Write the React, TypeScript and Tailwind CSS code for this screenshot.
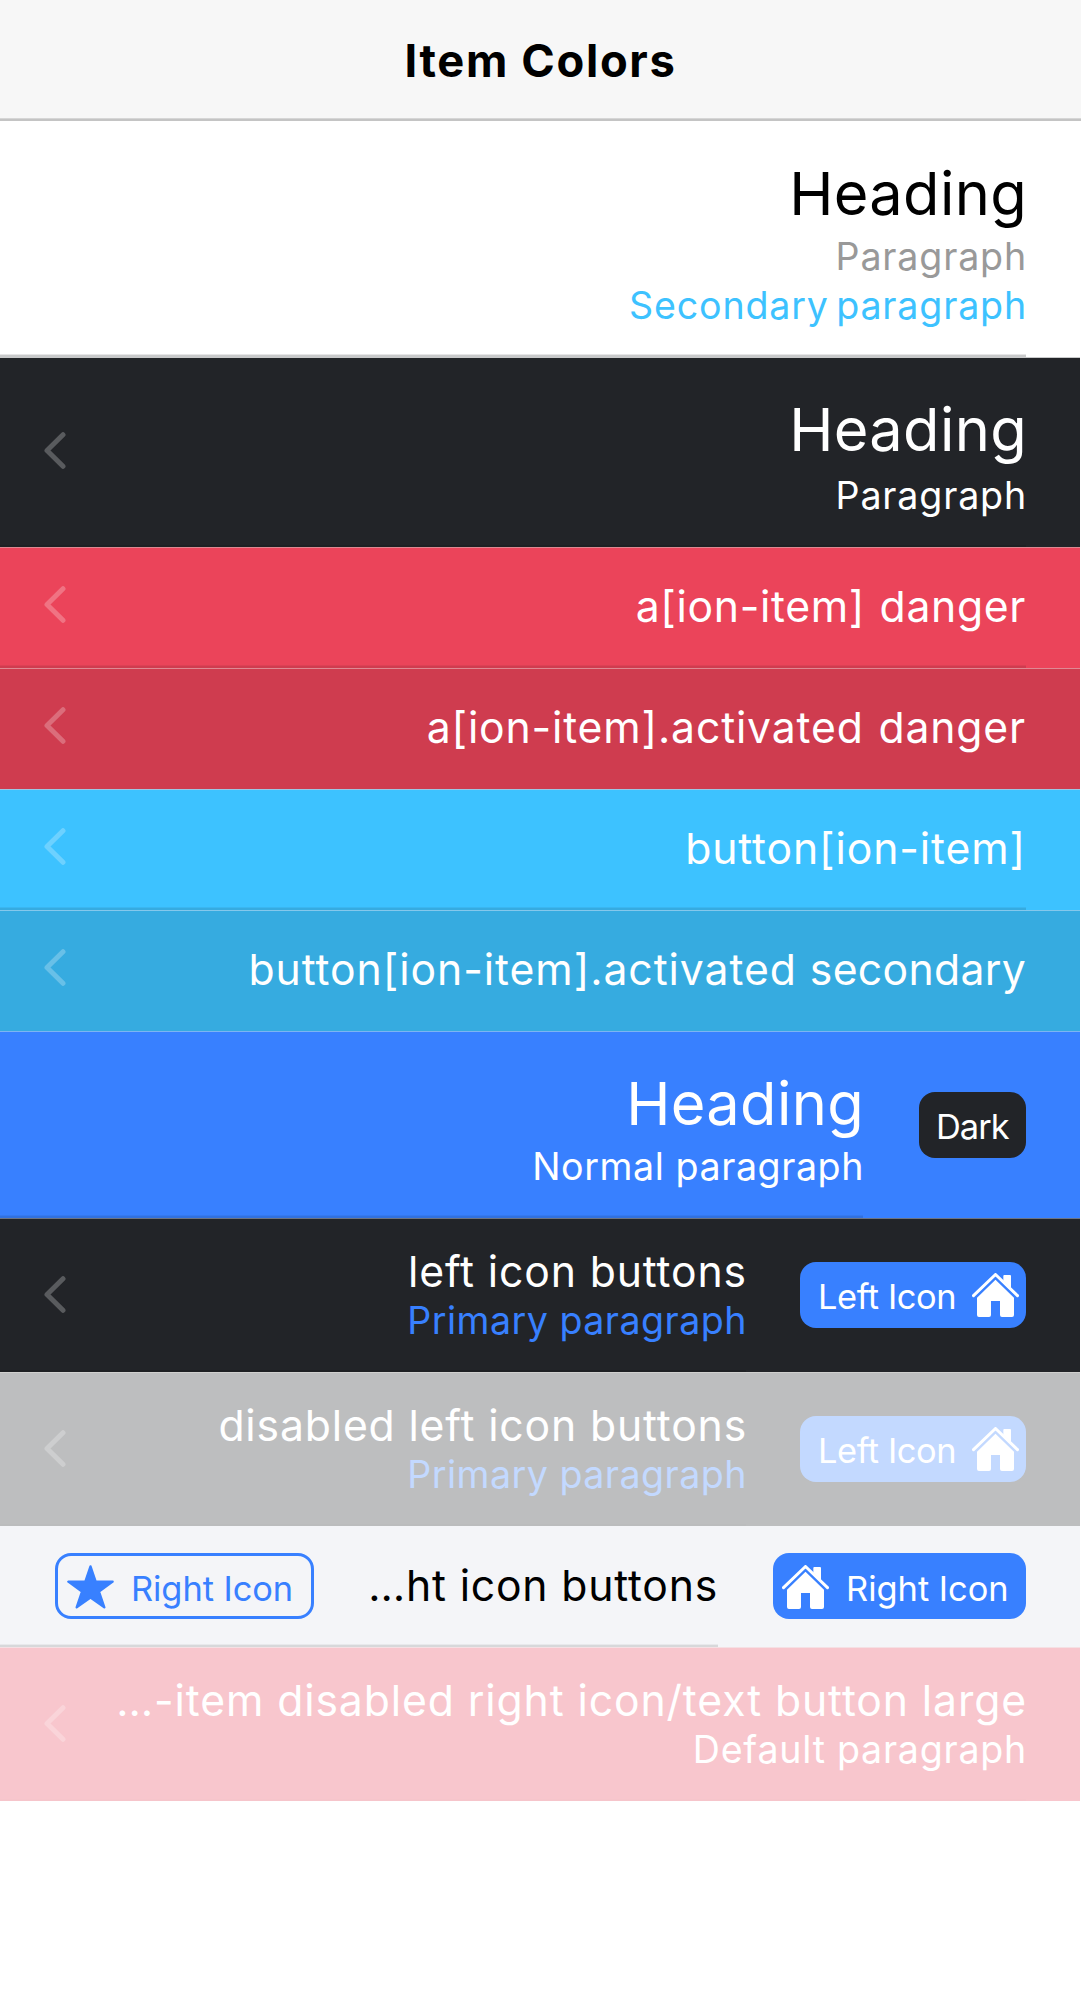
import type { ReactNode } from "react";

function Chevron({ className }: { className: string }) {
  return (
    <svg viewBox="0 0 22 37" className={"ml-[44px] h-[37px] w-[22px] shrink-0 text-white/25 " + className}>
      <path d="M19 2.7 L3 18.5 L19 34.3" fill="none" stroke="currentColor" strokeWidth="5" strokeLinecap="round" strokeLinejoin="round" />
    </svg>
  );
}

function Home({ className }: { className: string }) {
  return (
    <svg viewBox="0 0 141 132" className={"h-[44px] w-[47px] shrink-0 " + className} fill="currentColor">
      <path d="M4.500 68 L70.500 4.500 L136.500 68" fill="none" stroke="currentColor" strokeWidth="9" strokeLinecap="round" strokeLinejoin="round" />
      <path d="M94 23 V9 Q94 6 97 6 H114 Q117 6 117 9 V46 Z" />
      <path d="M70.500 20 L126 74 V126 Q126 132 120 132 H90 Q84 132 84 126 V84 H57 V126 Q57 132 51 132 H21 Q15 132 15 126 V74 Z" />
    </svg>
  );
}

function Star({ className }: { className: string }) {
  return (
    <svg viewBox="0 0 141 132" className={"h-[44px] w-[47px] shrink-0 " + className} fill="currentColor">
      <path d="M70.500 4 L86 50 H137 L96 80 L112 127 L70.500 98 L29 127 L45 80 L4 50 H55 Z" stroke="currentColor" strokeWidth="7" strokeLinejoin="round" />
    </svg>
  );
}

const heading = "mr-[-1px] text-[59.5px] leading-[72px] tracking-[0.35px]";
const para = "mr-[-1px] text-[37.6px] leading-[49px]";
const label = "text-[42.7px] leading-[54px]";
const button = "flex h-[66px] shrink-0 items-start rounded-[16px] text-[34.4px] leading-[70px]";

function Row({ className, line, slot, children }: { className: string; line: string; slot?: ReactNode; children: ReactNode }) {
  return (
    <div className={"flex items-start border-t pr-[54px] " + className}>
      <div className={"flex h-full flex-1 items-start justify-between border-b-2 " + line}>{children}</div>
      {slot}
    </div>
  );
}

const dangerLine = "border-[#cf3c4f] shadow-[inset_0_-1px_0_#dd4055]";
const secondaryLine = "border-[#36abe0] shadow-[inset_0_-1px_0_#3ab6f0]";

export default function App() {
  return (
    <div className="h-[1999px] w-[1081px] overflow-hidden whitespace-nowrap bg-white font-[Inter,sans-serif] text-black">
      <div className="w-[1080px]">
        <header className="flex h-[121px] w-[1081px] items-start justify-center border-b-2 border-[#c4c4c4] bg-[#f7f7f7] pt-[30px] shadow-[inset_0_-1px_0_#d6d6d6]">
          <h1 className="text-[45.3px] leading-[61px] font-bold tracking-[1.65px]">Item Colors</h1>
        </header>

        <Row className="h-[236px] border-white bg-white" line="border-[#c8c9ca] shadow-[inset_0_-1px_0_#e6e6e7]">
          <div className="ml-auto pt-[35px] text-right">
            <h2 className={heading}>Heading</h2>
            <p className={para + " mt-[3px] tracking-[0.84px] text-[#999999]"}>Paragraph</p>
            <p className={para + " tracking-[0.84px] text-[#3dc2ff] [word-spacing:-4px]"}>Secondary paragraph</p>
          </div>
        </Row>

        <Row className="h-[190px] border-[#c8c9ca] bg-[#222428] text-white" line="border-[#1e2023]">
          <Chevron className="mt-[74px]" />
          <div className="pt-[35px] text-right">
            <h2 className={heading}>Heading</h2>
            <p className={para + " mt-[6px] tracking-[0.84px]"}>Paragraph</p>
          </div>
        </Row>

        <Row className="h-[121px] border-[#dc8891] bg-[#eb445a] text-white" line={dangerLine}>
          <Chevron className="mt-[38px]" />
          <div className={label + " mt-[32px] tracking-[0.65px] [word-spacing:2px]"}>a[ion-item] danger</div>
        </Row>

        <Row className="h-[121px] border-[#e08893] bg-[#cf3c4f] text-white" line="border-[#cf3c4f]">
          <Chevron className="mt-[38px]" />
          <div className={label + " mt-[32px] tracking-[0.84px] [word-spacing:2px]"}>a[ion-item].activated danger</div>
        </Row>

        <Row className="h-[121px] border-[#9cc8e4] bg-[#3dc2ff] text-white" line={secondaryLine}>
          <Chevron className="mt-[38px]" />
          <div className={label + " mt-[32px] tracking-[0.88px]"}>button[ion-item]</div>
        </Row>

        <Row className="h-[121px] border-[#84c8ec] bg-[#36abe0] text-white" line="border-[#36abe0]">
          <Chevron className="mt-[38px]" />
          <div className={label + " mt-[32px] tracking-[0.94px]"}>
            button[ion-item].activated <span className="tracking-[0.3px]">secondary</span>
          </div>
        </Row>

        <Row
          className="h-[187px] border-[#7cb4f2] bg-[#3880ff] text-white"
          line="border-[#3171e0] shadow-[inset_0_-1px_0_#3579f0]"
          slot={
            <div className={button + " mt-[60px] ml-[56px] w-[107px] bg-[#222428] pl-[17px]"}>
              <span className="tracking-[-0.97px]">Dark</span>
            </div>
          }
        >
          <div className="ml-auto pt-[35px] text-right">
            <h2 className={heading}>Heading</h2>
            <p className={para + " mt-[3px] tracking-[0.58px]"}>Normal paragraph</p>
          </div>
        </Row>

        <Row
          className="h-[154px] border-[#6c7484] bg-[#222428] text-white"
          line="border-[#1e2023]"
          slot={
            <div className={button + " mt-[43px] ml-[54px] w-[226px] bg-[#3880ff] pl-[18px]"}>
              <span className="w-[154px] tracking-[-0.4px]">Left Icon</span>
              <Home className="mt-[11px]" />
            </div>
          }
        >
          <Chevron className="mt-[57px]" />
          <div className="pt-[26px] text-right">
            <div className={label + " mr-[-1px] tracking-[0.87px]"}>left icon buttons</div>
            <p className={para + " mt-[-3px] tracking-[0.48px] text-[#3880ff]"}>Primary paragraph</p>
          </div>
        </Row>

        <Row
          className="h-[154px] border-[#d0d0ce] bg-[#bdbebf] text-white"
          line="border-[#bbbcbd]"
          slot={
            <div className={button + " mt-[43px] ml-[54px] w-[226px] bg-[#c3d9ff] pl-[18px]"}>
              <span className="w-[154px] tracking-[-0.4px]">Left Icon</span>
              <Home className="mt-[11px]" />
            </div>
          }
        >
          <Chevron className="mt-[57px]" />
          <div className="pt-[26px] text-right">
            <div className={label + " mr-[-1px] tracking-[0.84px]"}>disabled left icon buttons</div>
            <p className={para + " mt-[-3px] tracking-[0.48px] text-[#c3d9ff]"}>Primary paragraph</p>
          </div>
        </Row>

        <Row
          className="h-[121px] border-[#f4f5f8] bg-[#f4f5f8] text-black"
          line="border-[#d7d8da] shadow-[inset_0_-1px_0_#e8e9ec]"
          slot={
            <div className={button + " mt-[26px] ml-[55px] w-[253px] gap-[17px] bg-[#3880ff] pl-[9px] text-white"}>
              <Home className="mt-[12px]" />
              <span className="mt-px">Right Icon</span>
            </div>
          }
        >
          <div className={button + " mt-[26px] ml-[55px] w-[259px] gap-[17px] border-[3px] border-[#3880ff] pl-[9px] text-[#3880ff]"}>
            <Star className="mt-[9px]" />
            <span className="mt-[-2px] tracking-[-0.05px]">Right Icon</span>
          </div>
          <div className={label + " mt-[32px] tracking-[0.8px]"}>…ht icon buttons</div>
        </Row>

        <Row className="h-[154px] border-[#f5e0e4] bg-[#f8c6cd] text-white" line="border-[#f6c5cb]">
          <Chevron className="mt-[57px]" />
          <div className="pt-[26px] text-right">
            <div className={label + " mr-[-1px] tracking-[0.89px]"}>…-item disabled right icon/text button large</div>
            <p className={para + " mt-[-3px] tracking-[0.75px]"}>Default paragraph</p>
          </div>
        </Row>
      </div>
    </div>
  );
}
